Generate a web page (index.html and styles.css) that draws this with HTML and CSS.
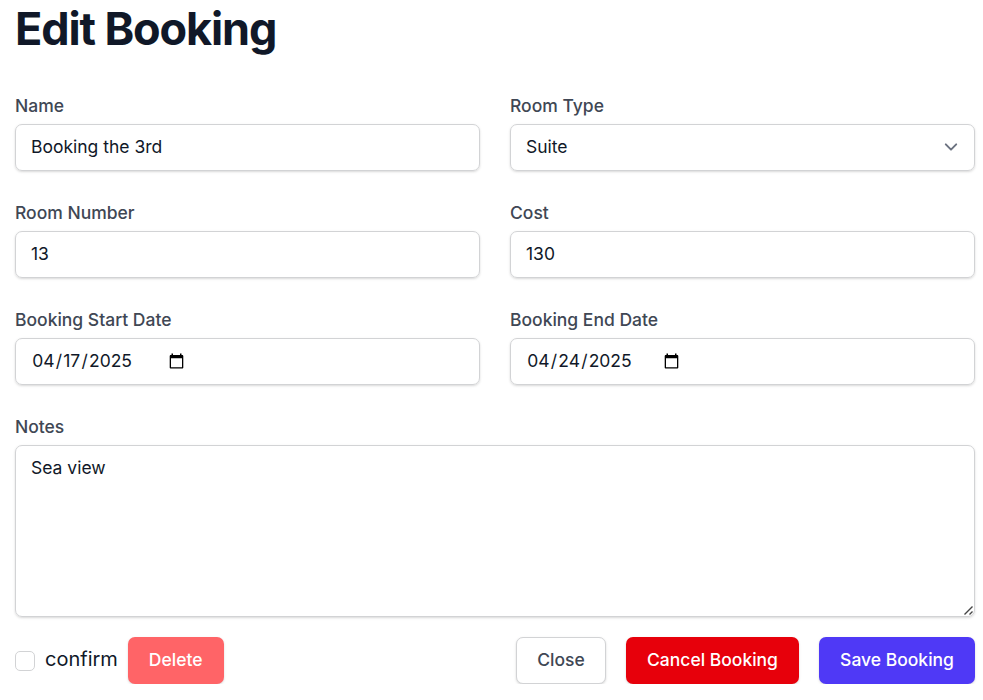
FILE: index.html
```html
<!DOCTYPE html>
<html lang="en">
<head>
<meta charset="utf-8">
<title>Edit Booking</title>
<link rel="stylesheet" href="styles.css">
</head>
<body>
<main>
<h1>Edit Booking</h1>
<form>
<div class="fields">
<div class="field"><label>Name</label><div class="control">Booking the 3rd</div></div>
<div class="field"><label>Room Type</label><div class="control select"><span>Suite</span><svg class="chevron" width="26" height="26" viewBox="0 0 20 20"><path d="M6 8l4 4 4-4"/></svg></div></div>
<div class="field"><label>Room Number</label><div class="control">13</div></div>
<div class="field"><label>Cost</label><div class="control">130</div></div>
<div class="field"><label>Booking Start Date</label><div class="control date"><div class="value"><span>04</span>/<span>17</span>/<span>2025</span></div><svg width="15" height="16" viewBox="0 0 15 16"><path fill-rule="evenodd" d="M2.500 .5H4V2h7V.5h1.500V2h.7c.6 0 1.100.5 1.100 1.100v11.300c0 .6-.5 1.100-1.100 1.100H1.800c-.6 0-1.100-.5-1.100-1.100V3.100C.7 2.500 1.200 2 1.800 2h.7zM2 5.300v8.900h11V5.300z"/></svg></div></div>
<div class="field"><label>Booking End Date</label><div class="control date"><div class="value"><span>04</span>/<span>24</span>/<span>2025</span></div><svg width="15" height="16" viewBox="0 0 15 16"><path fill-rule="evenodd" d="M2.500 .5H4V2h7V.5h1.500V2h.7c.6 0 1.100.5 1.100 1.100v11.300c0 .6-.5 1.100-1.100 1.100H1.800c-.6 0-1.100-.5-1.100-1.100V3.100C.7 2.500 1.200 2 1.800 2h.7zM2 5.300v8.900h11V5.300z"/></svg></div></div>
<div class="field wide"><label>Notes</label><div class="control notes">Sea view<svg class="grip" width="11" height="11" viewBox="0 0 11 11"><path d="M1.500 9.500L9.500 1.500M6.500 9.500l3-3"/></svg></div></div>
</div>
<div class="actions">
<span class="checkbox"></span><span class="confirm">confirm</span>
<button type="button" class="delete">Delete</button>
<button type="button" class="close">Close</button>
<button type="button" class="cancel">Cancel Booking</button>
<button type="button" class="save">Save Booking</button>
</div>
</form>
</main>
</body>
</html>
```
FILE: styles.css
```css
* { box-sizing: border-box; }
body { margin: 0; background: #fff; color: #101828; font: 17.5px/25px Inter, sans-serif; }
main { padding: 4px 8px 0 15px; }
h1 { margin: 0 0 41px; font-size: 45px; line-height: 50px; font-weight: 700; letter-spacing: -1.125px; }
.fields { display: grid; grid-template-columns: 1fr 1fr; gap: 31px 30px; }
.wide { grid-column: 1 / -1; }
label { display: block; margin-bottom: 7px; color: #404754; font-weight: 500; line-height: 22px; }
.control { height: 47px; padding: 9px 15px; border: 1px solid #d2d3d5; border-radius: 7px; color: #101828; box-shadow: 0 1px 3px rgba(0,0,0,.1), 0 1px 2px rgba(0,0,0,.06); }
.select { display: flex; justify-content: space-between; padding-right: 10px; }
.chevron { fill: none; stroke: #6b7280; stroke-width: 1.5; stroke-linecap: round; stroke-linejoin: round; }
.date { display: flex; }
.date svg { margin-top: 5px; }
.value { width: 138px; }
.value span { padding: 0 1.2px; }
.notes { position: relative; height: 172px; }
.grip { position: absolute; right: 0; bottom: 0; fill: none; stroke: #444; stroke-width: 1.4; }
.actions { display: flex; align-items: center; margin-top: 20px; }
.checkbox { width: 20px; height: 20px; border: 1px solid #d2d3d5; border-radius: 5px; }
.confirm { margin: 0 10px 2px; font-size: 20px; }
button { height: 47px; padding: 0 20px 2px; border: 1px solid transparent; border-radius: 7px; color: #fff; font: 500 17.5px/25px Inter, sans-serif; box-shadow: 0 1px 3px rgba(0,0,0,.1), 0 1px 2px rgba(0,0,0,.06); }
.delete { background: #ff6467; }
.close { width: 90px; margin-left: auto; color: #404754; background: #fff; border-color: #d2d3d5; }
.cancel { width: 173px; margin: 0 20px; background: #e7000b; }
.save { width: 156px; background: #4f39f6; }
```
